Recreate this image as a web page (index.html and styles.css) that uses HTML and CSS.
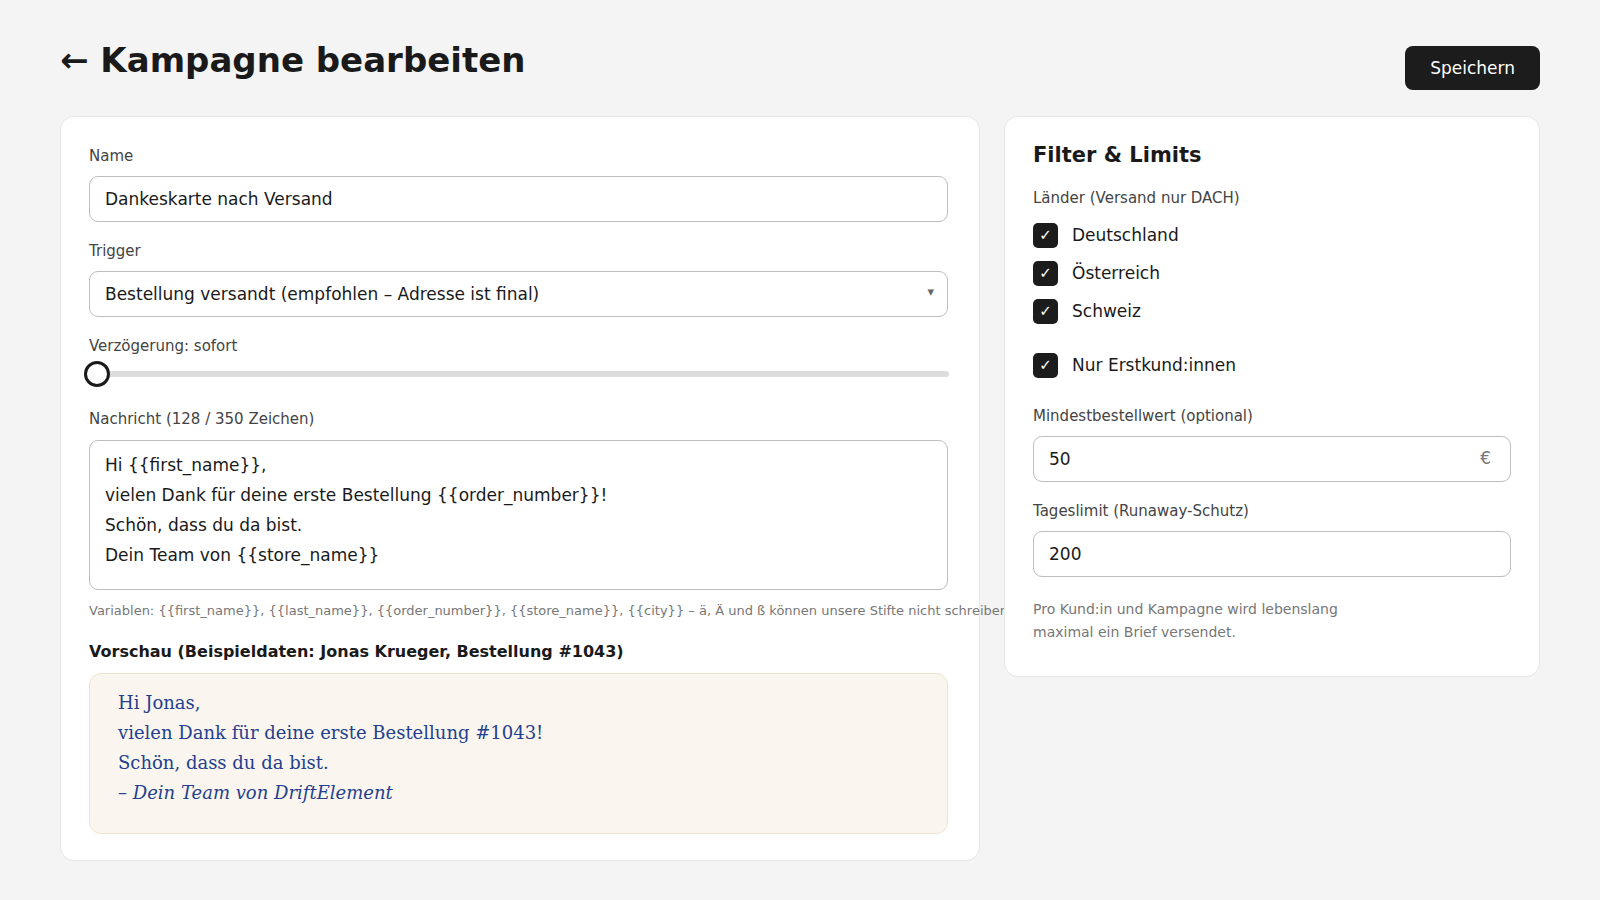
FILE: index.html
```html
<!DOCTYPE html>
<html lang="de">
<head>
    <meta charset="UTF-8">
    <meta name="viewport" content="width=device-width, initial-scale=1.0">
    <title>Kampagne bearbeiten</title>
    <link rel="stylesheet" href="styles.css">
</head>
<body>
    <div class="page">
        <header class="page-header">
            <h1><a href="#" class="back">←</a> Kampagne bearbeiten</h1>
            <button class="btn-save">Speichern</button>
        </header>

        <div class="layout">
            <section class="card card-main">
                <div class="field">
                    <label for="name">Name</label>
                    <input type="text" id="name" class="input" value="Dankeskarte nach Versand">
                </div>

                <div class="field">
                    <label for="trigger">Trigger</label>
                    <div class="select-wrap">
                        <select id="trigger" class="input">
                            <option>Bestellung versandt (empfohlen – Adresse ist final)</option>
                            <option>Bestellung bezahlt</option>
                            <option>Bestellung erstellt</option>
                        </select>
                    </div>
                </div>

                <div class="field field-range">
                    <label for="delay">Verzögerung: sofort</label>
                    <input type="range" id="delay" class="range" min="0" max="14" value="0">
                </div>

                <div class="field field-message">
                    <label for="message">Nachricht (128 / 350 Zeichen)</label>
                    <textarea id="message" class="input textarea">Hi {{first_name}},
vielen Dank für deine erste Bestellung {{order_number}}!
Schön, dass du da bist.
Dein Team von {{store_name}}</textarea>
                    <p class="hint">Variablen: {{first_name}}, {{last_name}}, {{order_number}}, {{store_name}}, {{city}} – ä, Ä und ß können unsere Stifte nicht schreiben</p>
                </div>

                <h3 class="preview-title">Vorschau (Beispieldaten: Jonas Krueger, Bestellung #1043)</h3>
                <div class="preview">
                    <p>Hi Jonas,</p>
                    <p>vielen Dank für deine erste Bestellung #1043!</p>
                    <p>Schön, dass du da bist.</p>
                    <p>– <em>Dein Team von DriftElement</em></p>
                </div>
            </section>

            <aside class="card card-side">
                <h2>Filter &amp; Limits</h2>

                <span class="label">Länder (Versand nur DACH)</span>
                <div class="checks">
                    <label class="check"><input type="checkbox" checked><span class="box">✓</span>Deutschland</label>
                    <label class="check"><input type="checkbox" checked><span class="box">✓</span>Österreich</label>
                    <label class="check"><input type="checkbox" checked><span class="box">✓</span>Schweiz</label>
                </div>

                <label class="check check-single"><input type="checkbox" checked><span class="box">✓</span>Nur Erstkund:innen</label>

                <div class="field">
                    <label for="minvalue">Mindestbestellwert (optional)</label>
                    <div class="suffix-wrap">
                        <input type="text" id="minvalue" class="input" value="50">
                        <span class="suffix">€</span>
                    </div>
                </div>

                <div class="field">
                    <label for="daylimit">Tageslimit (Runaway-Schutz)</label>
                    <input type="text" id="daylimit" class="input" value="200">
                </div>

                <p class="note">Pro Kund:in und Kampagne wird lebenslang maximal ein Brief versendet.</p>
            </aside>
        </div>
    </div>

    <script>
        // Zeichenzähler und Verzögerungsanzeige
        const message = document.getElementById('message');
        const delay = document.getElementById('delay');

        message.addEventListener('input', function () {
            document.querySelector('label[for="message"]').textContent =
                'Nachricht (' + message.value.length + ' / 350 Zeichen)';
        });

        delay.addEventListener('input', function () {
            const tage = Number(delay.value);
            let text = 'sofort';
            if (tage === 1) text = '1 Tag';
            if (tage > 1) text = tage + ' Tage';
            document.querySelector('label[for="delay"]').textContent = 'Verzögerung: ' + text;
        });
    </script>
</body>
</html>
```

FILE: styles.css
```css
body {
    margin: 0;
    background-color: #f4f4f4;
    color: #1a1a1a;
    font-family: "DejaVu Sans", Verdana, sans-serif;
}
.page {
    padding: 34px 60px 40px;
}
.page-header {
    display: flex;
    justify-content: space-between;
    align-items: center;
    margin-bottom: 26px;
}
.page-header h1 {
    margin: 0 0 4px;
    font-size: 34px;
    line-height: 40px;
    font-weight: bold;
}
.back {
    color: inherit;
    text-decoration: none;
}
.btn-save {
    margin-top: 12px;
    padding: 12px 25px;
    font-family: inherit;
    font-size: 17px;
    line-height: 20px;
    color: #fff;
    background-color: #1c1c1c;
    border: none;
    border-radius: 8px;
    cursor: pointer;
}
.btn-save:hover {
    background-color: #333;
}
.layout {
    display: grid;
    grid-template-columns: minmax(0, 1fr) 536px;
    gap: 24px;
    align-items: start;
}
.card {
    background-color: #fff;
    border: 1px solid #e6e6e6;
    border-radius: 14px;
    padding: 28px;
}
.card-main {
    padding: 29px 31px 26px 28px;
}
.card-side {
    position: sticky;
    top: 24px;
}
.field {
    margin-bottom: 19px;
}
.field label,
.label {
    display: block;
    font-size: 15px;
    line-height: 20px;
    color: #444;
    margin-bottom: 10px;
}
.field-message label {
    margin-bottom: 11px;
}
.input {
    display: block;
    width: 100%;
    box-sizing: border-box;
    height: 46px;
    padding: 0 15px;
    font-family: inherit;
    font-size: 17px;
    color: #1a1a1a;
    background-color: #fff;
    border: 1px solid #bdbdc2;
    border-radius: 9px;
}
.input:focus {
    outline: none;
    border-color: #1c1c1c;
}
.select-wrap,
.suffix-wrap {
    position: relative;
}
select.input {
    appearance: none;
    -webkit-appearance: none;
    padding-right: 40px;
}
.select-wrap::after {
    content: "▾";
    position: absolute;
    right: 14px;
    top: 13px;
    font-size: 13px;
    color: #666;
    pointer-events: none;
}
.field-range {
    margin-bottom: 22px;
}
.range {
    -webkit-appearance: none;
    appearance: none;
    display: block;
    width: calc(100% + 6px);
    height: 26px;
    margin: -5px 0 0 -5px;
    background: transparent;
}
.range::-webkit-slider-runnable-track {
    height: 6px;
    background-color: #dcdcdc;
    border-radius: 3px;
}
.range::-webkit-slider-thumb {
    -webkit-appearance: none;
    box-sizing: border-box;
    width: 26px;
    height: 26px;
    margin-top: -10px;
    border-radius: 50%;
    background-color: #fff;
    border: 3px solid #1a1a1a;
}
.field-message {
    margin-bottom: 22px;
}
.textarea {
    height: 150px;
    padding: 9px 15px;
    line-height: 30px;
    resize: none;
}
.hint {
    margin: 12px 0 0;
    font-size: 13px;
    line-height: 18px;
    color: #777;
    white-space: nowrap;
}
.preview-title {
    margin: 0 0 11px;
    font-size: 16px;
    line-height: 20px;
    font-weight: bold;
}
.preview {
    height: 161px;
    box-sizing: border-box;
    padding: 14px 28px;
    background-color: #faf6ef;
    border: 1px solid #eee3cc;
    border-radius: 12px;
    font-family: "DejaVu Serif", Georgia, serif;
    font-size: 18px;
    line-height: 30px;
    color: #24408e;
}
.preview p {
    margin: 0;
}
.card-side h2 {
    margin: 0 0 22px;
    font-size: 21px;
    line-height: 21px;
}
.checks {
    display: flex;
    flex-direction: column;
    gap: 12px;
    margin-top: 14px;
}
.check {
    display: flex;
    align-items: center;
    gap: 14px;
    height: 26px;
    font-size: 17px;
    cursor: pointer;
}
.check input {
    display: none;
}
.box {
    width: 25px;
    height: 25px;
    border-radius: 5px;
    background-color: #1c1c1c;
    color: #fff;
    font-size: 15px;
    display: flex;
    align-items: center;
    justify-content: center;
}
.check-single {
    margin: 28px 0;
}
.suffix {
    position: absolute;
    right: 20px;
    top: 12px;
    font-size: 17px;
    color: #777;
}
.note {
    max-width: 320px;
    margin: 21px 0 4px;
    font-size: 14px;
    line-height: 23px;
    color: #777;
}
```
